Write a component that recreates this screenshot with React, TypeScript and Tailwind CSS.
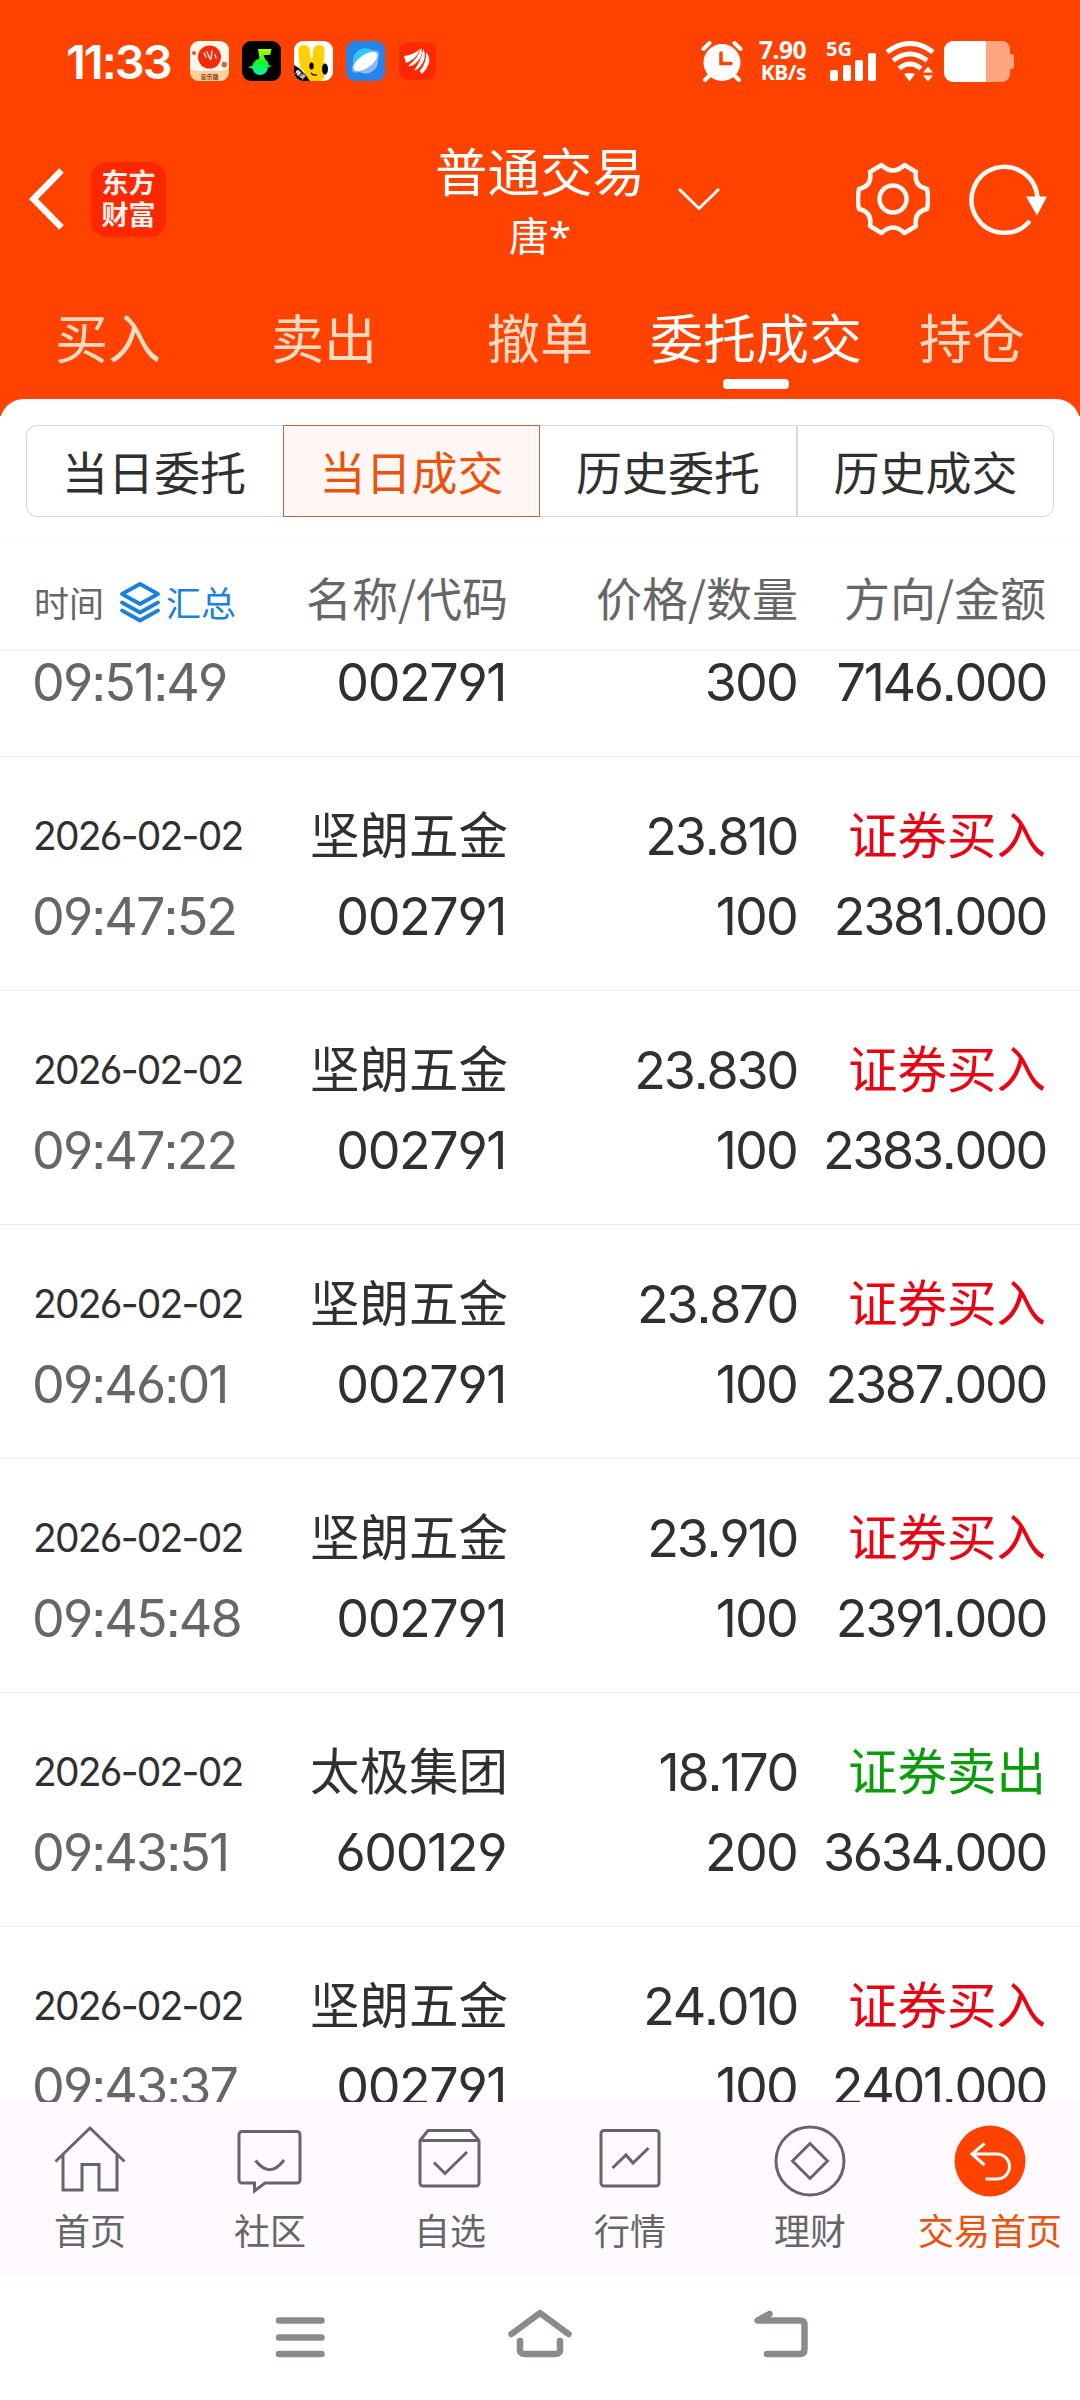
import React from "react";
import { clsx } from "clsx";

interface Deal {
  date?: string;
  time: string;
  name?: string;
  code: string;
  price?: string;
  count: string;
  side?: "buy" | "sell";
  amount: string;
}

const DEALS: Deal[] = [
  { time: "09:51:49", code: "002791", count: "300", amount: "7146.000" },
  { date: "2026-02-02", time: "09:47:52", name: "坚朗五金", code: "002791", price: "23.810", count: "100", side: "buy", amount: "2381.000" },
  { date: "2026-02-02", time: "09:47:22", name: "坚朗五金", code: "002791", price: "23.830", count: "100", side: "buy", amount: "2383.000" },
  { date: "2026-02-02", time: "09:46:01", name: "坚朗五金", code: "002791", price: "23.870", count: "100", side: "buy", amount: "2387.000" },
  { date: "2026-02-02", time: "09:45:48", name: "坚朗五金", code: "002791", price: "23.910", count: "100", side: "buy", amount: "2391.000" },
  { date: "2026-02-02", time: "09:43:51", name: "太极集团", code: "600129", price: "18.170", count: "200", side: "sell", amount: "3634.000" },
  { date: "2026-02-02", time: "09:43:37", name: "坚朗五金", code: "002791", price: "24.010", count: "100", side: "buy", amount: "2401.000" },
];

const TABS = ["买入", "卖出", "撤单", "委托成交", "持仓"];
const SEGMENTS = ["当日委托", "当日成交", "历史委托", "历史成交"];

const NUM = "font-['Inter','Noto_Sans_CJK_SC',sans-serif] [font-feature-settings:'cv03','cv04','ss07'] [font-kerning:none]";

const AppIcons = () => (
  <div className="flex gap-[13px]">
    <svg width="39" height="40" viewBox="0 0 39 40">
      <rect width="39" height="40" rx="9" fill="#fff6e8" />
      <path d="M0 28 Q4 30 8 30 H31 Q36 30 39 27 V31 a9 9 0 0 1 -9 9 H9 a9 9 0 0 1 -9 -9 Z" fill="#fbcf9c" />
      <circle cx="19.5" cy="16" r="11.5" fill="#f42a0c" />
      <path d="M14 12 l2 4 M17 11 l3 7 M22 10 l-1 8 M25 14 l1 3" stroke="#ffe9d5" strokeWidth="1.400" strokeLinecap="round" />
      <circle cx="4" cy="12" r="2" fill="#e0553a" />
      <rect x="32" y="21" width="5" height="5" rx="1" fill="#d8603a" transform="rotate(15 34 23)" />
      <text x="19.5" y="38" fontSize="6" fontWeight="700" textAnchor="middle" fill="#7b3a12">音乐版</text>
    </svg>
    <svg width="39" height="40" viewBox="0 0 39 40">
      <defs>
        <linearGradient id="note" x1="0" y1="0" x2="0" y2="1">
          <stop offset="0" stopColor="#b4ff00" />
          <stop offset="0.5" stopColor="#10ff20" />
          <stop offset="1" stopColor="#10e8b8" />
        </linearGradient>
      </defs>
      <rect width="39" height="40" rx="9" fill="#000" />
      <path d="M16 8 H29.500 L28 14 H21.500 L23 18 Q26 20 26.500 24 L30 25 L26 26.500 Q24.500 34 18 34 Q12 34 10.500 27.500 L6 26.500 L10.500 24.500 Q11.500 19.500 17.500 17.500 Z" fill="url(#note)" />
    </svg>
    <svg width="39" height="40" viewBox="0 0 39 40">
      <defs>
        <clipPath id="rabbit"><rect width="39" height="40" rx="9" /></clipPath>
      </defs>
      <g clipPath="url(#rabbit)">
        <rect width="39" height="40" fill="#fff" />
        <rect x="5" y="4" width="11.500" height="26" rx="5.500" fill="#ffd000" transform="rotate(-6 10 16)" />
        <rect x="18.500" y="4" width="11.500" height="26" rx="5.500" fill="#ffd000" transform="rotate(6 25 16)" />
        <path d="M11 22 Q16 17 20 18 Q32 19 33 27 Q33 34 27 40 H10 Z" fill="#ffd000" />
        <ellipse cx="17.500" cy="25" rx="2.200" ry="3.500" fill="#000" />
        <ellipse cx="31" cy="28" rx="3" ry="5.500" fill="#000" />
        <path d="M17 32 q3 3.500 6 1.500" stroke="#000" strokeWidth="1.200" fill="none" />
        <path d="M0 24 Q8 28 16 40 H0 Z" fill="#000" />
        <text x="1" y="33" fontSize="5.500" fontWeight="700" fill="#fff" transform="rotate(42 3 32)">畅读</text>
      </g>
    </svg>
    <svg width="39" height="40" viewBox="0 0 39 40">
      <rect width="39" height="40" rx="9" fill="#2583ea" />
      <circle cx="19.500" cy="20" r="12.500" fill="#8cbcf3" />
      <path d="M7.500 23 A12.500 12.500 0 0 1 30 13 Z" fill="#25cdf8" />
      <ellipse cx="19.500" cy="20.500" rx="16.500" ry="7" fill="#75aef1" transform="rotate(-36 19.500 20.500)" />
      <ellipse cx="19.500" cy="20.500" rx="14" ry="6.500" fill="#fff" transform="rotate(-36 19.500 20.500)" />
    </svg>
    <svg width="39" height="40" viewBox="0 0 39 40">
      <rect x="0.500" y="0.500" width="38" height="39" rx="9" fill="#ff2800" stroke="#ff4a14" />
      <path d="M6 15 Q15 14 22 8 Q19 18 8 22 Z" fill="#fff" />
      <path d="M23 9 Q24 14 20 19 Q16 24 11 25 Q20 18 23 9 Z" fill="#fff" stroke="#fff" strokeWidth="1.200" />
      <path d="M25.500 10 Q27.500 16 24 22 Q21 27 17 29 Q23.500 20 25.500 10 Z" fill="#fff" stroke="#fff" strokeWidth="1.200" />
      <path d="M28 11 Q32.500 17 31 22 Q29 28 24 33 L21.500 30 Q29 22 28 11 Z" fill="#fff" />
    </svg>
  </div>
);

const StatusBar = () => (
  <div className="flex h-[122px] items-center pl-[66px] pr-[66px]">
    <span className={clsx(NUM, "w-[124px] text-[47px] font-semibold leading-none tracking-[-2px] whitespace-nowrap")}>11:33</span>
    <AppIcons />
    <div className="ml-auto flex items-center">
      <svg width="42" height="42" viewBox="0 0 42 42" fill="none" stroke="#fff" strokeWidth="4" strokeLinecap="round">
        <circle cx="21" cy="22.500" r="18.500" fill="#fff" stroke="none" />
        <path d="M2.500 9 L8.500 3 M39.500 9 L33.500 3 M4 40 L8 36 M38 40 L34 36" />
        <path d="M20 13 V23.500 H30" stroke="#ff4200" strokeWidth="3.500" />
      </svg>
      <div className="ml-[13px] flex w-[50px] flex-col items-end pb-[2px] font-['Noto_Sans',sans-serif] font-bold">
        <span className="text-[24.500px] leading-[23px] tracking-[-0.5px]">7.90</span>
        <span className="text-[21px] leading-[22px] tracking-[-0.5px]">KB/s</span>
      </div>
      <div className="relative ml-[21px] h-[40px] w-[50px]">
        <span className="absolute -left-px -top-px font-['Noto_Sans',sans-serif] text-[20px] font-bold leading-[17px]">5G</span>
        <div className="flex h-full items-end gap-[4.500px] pl-[3px]">
          <i className="h-[11px] w-[8px] rounded-[2px] bg-white" />
          <i className="h-[16px] w-[8px] rounded-[2px] bg-white" />
          <i className="h-[21px] w-[8px] rounded-[2px] bg-white" />
          <i className="h-[28px] w-[8px] rounded-[2px] bg-white" />
        </div>
      </div>
      <svg className="ml-[8px]" width="50" height="41" viewBox="0 0 50 41" fill="none" stroke="#fff" strokeWidth="5">
        <path d="M2 11 Q25 -6 48 11" />
        <path d="M8 19.500 Q25 6.500 42 19.500" />
        <path d="M14 27.500 Q25 18.500 36 27.500" />
        <path d="M19 33 Q25 31 30 33 L24.500 40.500 Z M38 31.500 L43 25.500 L48 31.500 Z M38 34.500 L43 40.500 L48 34.500 Z" fill="#fff" stroke="none" />
      </svg>
      <svg className="ml-[9px]" width="70" height="41" viewBox="0 0 70 41">
        <path d="M9 0 H42 V41 H9 a9 9 0 0 1 -9 -9 V9 a9 9 0 0 1 9 -9 Z" fill="#fff" />
        <path d="M42 0 H58 a8 8 0 0 1 8 8 V13 H67 a3 3 0 0 1 3 3 V25 a3 3 0 0 1 -3 3 H66 V33 a8 8 0 0 1 -8 8 H42 Z" fill="#ffa681" />
      </svg>
    </div>
  </div>
);

const TitleBar = () => (
  <div className="flex h-[156px] items-center pb-[2px] pl-[29px] pr-[33px]">
    <svg width="35" height="62" viewBox="0 0 35 62" fill="none" stroke="#fff" strokeWidth="6.500">
      <path d="M32.500 2.500 L4.500 31 L32.500 59.500" />
    </svg>
    <div className="ml-[27px] flex h-[75px] w-[75px] flex-col items-center justify-center rounded-[16px] bg-[#ff2700] pb-[2px] text-[27px] font-bold leading-[32px] text-[#fff1ec]">
      <span>东方</span>
      <span>财富</span>
    </div>
    <div className="ml-[270px] flex w-[208px] flex-col items-center">
      <span className="text-[52.500px] leading-[60px] whitespace-nowrap">普通交易</span>
      <span className="mt-[13px] font-['Noto_Sans','Noto_Sans_CJK_SC',sans-serif] text-[40px] leading-[48px]">唐*</span>
    </div>
    <svg className="ml-[33px]" width="44" height="24" viewBox="0 0 44 24" fill="none" stroke="#fff" strokeWidth="3">
      <path d="M2 2 L22 21.500 L42 2" />
    </svg>
    <svg className="ml-auto" width="74" height="74" viewBox="0 0 74 74" fill="none" stroke="#fff8f0" strokeWidth="4.500" strokeLinejoin="round">
      <path d="M25.500 3 Q37 14 48.500 3 L60 10 Q57.500 24 71 27 Q73 37 71 47 Q57.500 50 60 64 L48.500 71 Q37 60 25.500 71 L14 64 Q16.500 50 3 47 Q1 37 3 27 Q16.500 24 14 10 Z" />
      <circle cx="37" cy="37" r="13.500" />
    </svg>
    <svg className="ml-[38px]" width="79" height="74" viewBox="0 0 79 74" fill="none" stroke="#fff8f0" strokeWidth="4.500" strokeLinecap="round">
      <path d="M69.500 37 A33 33 0 1 0 60.500 60.500" />
      <path d="M58 34.500 H79 L69 53.500 Z" fill="#fff" stroke="none" />
    </svg>
  </div>
);

const Tabs = () => (
  <div className="grid h-[121px] grid-cols-5 text-[53px] text-[#ffd9c2]">
    {TABS.map((tab) => (
      <div key={tab} className={clsx("flex flex-col items-center pt-[28px] leading-[60px] whitespace-nowrap", tab === "委托成交" && "text-white")}>
        {tab}
        {tab === "委托成交" && <i className="mt-[13px] h-[10px] w-[66px] rounded-[4px] bg-white" />}
      </div>
    ))}
  </div>
);

const DealRow = ({ deal }: { deal: Deal }) => (
  <div className="grid h-[234px] shrink-0 grid-cols-[310px_196px_291px_249px] grid-rows-[80px_80px] items-center border-b border-[#ebebeb] pt-[40px] text-right text-[#303030]">
    <span className={clsx(NUM, "pb-[2px] pl-[33px] text-left text-[39px] tracking-[-1.800px]")}>{deal.date}</span>
    <span className="pb-[8px] text-[49.500px] leading-[64px] whitespace-nowrap">{deal.name}</span>
    <span className={clsx(NUM, "text-[52px] tracking-[-2.200px]")}>{deal.price}</span>
    <span className={clsx("pb-[8px] text-[49.500px] leading-[64px] whitespace-nowrap", deal.side === "sell" ? "text-[#0a9d0a]" : "text-[#ea0412]")}>
      {deal.side && (deal.side === "buy" ? "证券买入" : "证券卖出")}
    </span>
    <span className={clsx(NUM, "pl-[32px] text-left text-[52px] tracking-[-1.900px] text-[#666]")}>{deal.time}</span>
    <span className={clsx(NUM, "text-[52px] tracking-[-1.400px]")}>{deal.code}</span>
    <span className={clsx(NUM, "text-[52px] tracking-[-1.800px]")}>{deal.count}</span>
    <span className={clsx(NUM, "text-[52px] tracking-[-2.300px]")}>{deal.amount}</span>
  </div>
);

const NAV = [
  {
    label: "首页",
    icon: <path d="M1.500 36.500 L36 3 L70.500 36.500 M9 29.500 V65 H28 V39.500 H45 V65 H63 V29.500" />,
  },
  {
    label: "社区",
    icon: <path d="M8 6.500 H63 a3 3 0 0 1 3 3 V55 a3 3 0 0 1 -3 3 H31 L20.500 66 V58 H8 a3 3 0 0 1 -3 -3 V9.500 a3 3 0 0 1 3 -3 Z M21.500 35.500 Q36 54 50 35" />,
  },
  {
    label: "自选",
    icon: <path d="M6 15.500 L14 5.500 H56.500 L65 15.500 V58 a3 3 0 0 1 -3 3 H9 a3 3 0 0 1 -3 -3 Z M6 15.500 H65 M20 37.500 L31 48.500 L53 27" />,
  },
  {
    label: "行情",
    icon: <path d="M10 5.500 H62 a3 3 0 0 1 3 3 V58 a3 3 0 0 1 -3 3 H10 a3 3 0 0 1 -3 -3 V8.500 a3 3 0 0 1 3 -3 Z M18.500 43 L32 30 L39 38 L54.500 23" />,
  },
  {
    label: "理财",
    icon: (
      <>
        <circle cx="36" cy="36" r="34" />
        <path d="M36 18.500 L53.500 36 L36 53.500 L18.500 36 Z" />
      </>
    ),
  },
  {
    label: "交易首页",
    icon: (
      <>
        <circle cx="36" cy="36" r="35.500" fill="#ff4200" stroke="none" />
        <path d="M30.500 18.500 L18 29 L30.500 40 M18 29 H43 a12.500 12.500 0 0 1 0 25 H31.500" stroke="#fff" />
      </>
    ),
  },
];

export default function App() {
  return (
    <div className="flex h-[2400px] w-[1080px] flex-col overflow-hidden bg-white font-['Noto_Sans_CJK_SC',sans-serif]">
      <header className="h-[416px] shrink-0 overflow-hidden bg-[#ff4200] text-white">
        <StatusBar />
        <TitleBar />
        <Tabs />
        <div className="h-[60px] rounded-t-[24px] bg-white" />
      </header>

      <div className="mx-[26px] mt-[9px] grid h-[92px] shrink-0 grid-cols-4 text-[46px] text-[#303030]">
        {SEGMENTS.map((seg, i) => (
          <div
            key={seg}
            className={clsx(
              "flex items-center justify-center border pb-[2px] whitespace-nowrap",
              i === 1 ? "border-[#b9673c] bg-[#fff6f5] text-[#e9530b]" : "border-[#d6d8dd]",
              i === 0 && "rounded-l-[11px] border-r-0 pr-[2px]",
              i === 2 && "border-l-0",
              i === 3 && "rounded-r-[11px]"
            )}
          >
            {seg}
          </div>
        ))}
      </div>

      <div className="mt-[26px] grid h-[108px] shrink-0 grid-cols-[300px_208px_290px_248px] border-y border-t-[#fafafa] border-b-[#ececec] pt-[17px] text-right text-[46px] leading-[70px] text-[#666] whitespace-nowrap">
        <div className="flex h-[82px] items-center pl-[34px] text-[35px]">
          <span>时间</span>
          <svg className="ml-[15px]" width="42" height="42" viewBox="0 0 42 42" fill="none" stroke="#1a80dd" strokeWidth="3.800" strokeLinejoin="round" strokeLinecap="round">
            <path d="M21 3 L39 13 L21 23 L3 13 Z M3 21.500 L21 31.500 L39 21.500 M3 29.500 L21 39.500 L39 29.500" />
          </svg>
          <span className="ml-[5px] text-[#1a80dd]">汇总</span>
        </div>
        <span>名称/代码</span>
        <span>价格/数量</span>
        <span>方向/金额</span>
      </div>

      <main className="h-[1451px] shrink-0 overflow-hidden">
        <div className="-mt-[128px] flex flex-col">
          {DEALS.map((deal) => (
            <DealRow key={deal.time} deal={deal} />
          ))}
        </div>
      </main>

      <nav className="grid h-[172px] shrink-0 grid-cols-6 bg-[#fefaff] pt-[23px]">
        {NAV.map(({ label, icon }) => (
          <div key={label} className={clsx("flex flex-col items-center text-[36px] leading-[44px] whitespace-nowrap", label === "交易首页" ? "text-[#e9530b]" : "text-[#666]")}>
            <svg width="72" height="72" viewBox="0 0 72 72" fill="none" stroke="#666" strokeWidth="3">
              {icon}
            </svg>
            <span className="mt-[10px]">{label}</span>
          </div>
        ))}
      </nav>

      <footer className="flex h-[126px] shrink-0 items-start justify-between pl-[274px] pr-[271px] pt-[35px]">
        <svg width="52" height="50" viewBox="0 0 52 50" stroke="#8d8a8e" strokeWidth="6.500" strokeLinecap="round">
          <path d="M5 11.500 H47.500 M5 28.500 H47.500 M5 45 H47.500" />
        </svg>
        <svg width="66" height="50" viewBox="0 0 66 50" fill="none" stroke="#8d8a8e" strokeWidth="6.500" strokeLinecap="round" strokeLinejoin="round">
          <path d="M4.500 25 L33 4 L61.500 25 M13 32 V41 Q13 45 18 45 H48 Q53 45 53 41 V32" />
        </svg>
        <svg width="56" height="50" viewBox="0 0 56 50" fill="none" stroke="#8d8a8e" strokeWidth="6.500" strokeLinecap="round" strokeLinejoin="round">
          <path d="M16.500 5 L4.500 11.500 H47 Q51.500 11.500 51.500 16 V40 Q51.500 45 47 45 H14" />
        </svg>
      </footer>
    </div>
  );
}
